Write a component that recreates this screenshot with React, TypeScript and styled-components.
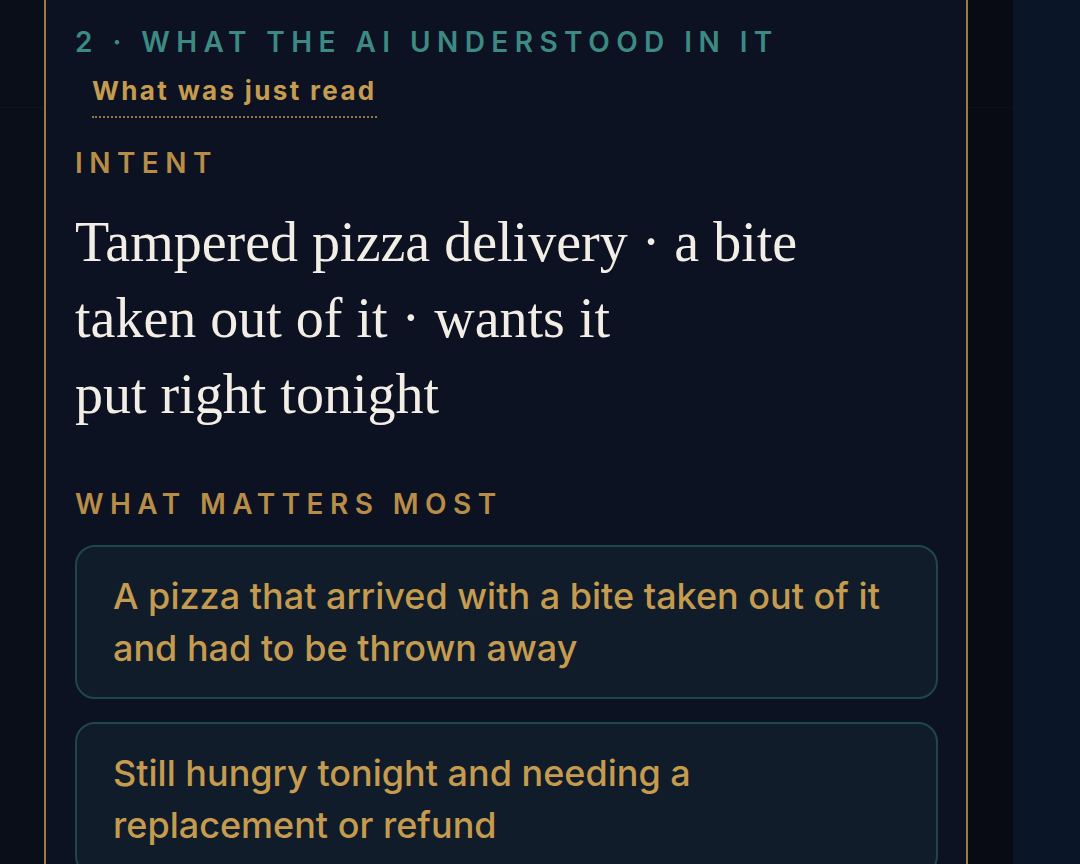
import styled, { createGlobalStyle } from 'styled-components';

const GlobalStyle = createGlobalStyle`
  html, body {
    margin: 0;
    padding: 0;
    background: #0a0e18;
  }
  * {
    box-sizing: border-box;
  }
`;

const gold = '#b88d48';
const goldText = '#c59b4f';
const teal = '#3d8a84';

// page shell: dark gutters either side of the bordered panel
const Page = styled.div`
  display: flex;
  width: 1080px;
  height: 864px;
  overflow: hidden;
  background: #0a0e18;
`;

const Gutter = styled.div<{ $tone: string; $width: number }>`
  flex: 0 0 ${(p) => p.$width}px;
  background: ${(p) => p.$tone};
  background-image: linear-gradient(
    to bottom,
    transparent 107px,
    rgba(255, 255, 255, 0.018) 107px,
    rgba(255, 255, 255, 0.018) 108px,
    transparent 108px
  );
`;

const SidePane = styled.div`
  flex: 1;
  background: #0a1628;
`;

const Panel = styled.main`
  flex: 0 0 924px;
  background: #0c1221;
  border-left: 2px solid #9c7a42;
  border-right: 2px solid #9c7a42;
  padding: 24px 28px 0 29px;
  display: flex;
  flex-direction: column;
`;

const Eyebrow = styled.div<{ $color: string; $gap?: number }>`
  margin-top: ${(p) => p.$gap ?? 0}px;
  font-family: 'Inter', sans-serif;
  font-weight: 600;
  font-size: 28px;
  line-height: 36px;
  letter-spacing: 0.23em;
  text-transform: uppercase;
  color: ${(p) => p.$color};
`;

const SourceLink = styled.span`
  align-self: flex-start;
  margin: 14px 0 0 17px;
  padding-bottom: 8px;
  font-family: 'Inter', sans-serif;
  font-weight: 700;
  font-size: 26px;
  line-height: 34px;
  letter-spacing: 0.09em;
  color: ${goldText};
  border-bottom: 2px dotted rgba(197, 155, 79, 0.75);
`;

const IntentText = styled.p`
  margin: 23px 0 0;
  font-family: 'Liberation Serif', serif;
  font-size: 56px;
  line-height: 76px;
  color: #f3eee5;
`;

const Cards = styled.div`
  display: flex;
  flex-direction: column;
  gap: 23px;
  margin-top: 23px;
`;

const Card = styled.div`
  background: #111c2a;
  border: 2px solid #1e474d;
  border-radius: 20px;
  padding: 23px 36px;
  font-family: 'Inter', sans-serif;
  font-weight: 500;
  font-size: 36px;
  line-height: 52px;
  color: ${goldText};
`;

const matters = [
  'A pizza that arrived with a bite taken out of it and had to be thrown away',
  'Still hungry tonight and needing a replacement or refund',
];

const App = () => {
  return (
    <>
      <GlobalStyle />
      <Page>
        <Gutter $tone="#0a0e18" $width={44} />
        <Panel>
          <Eyebrow $color={teal}>2 · What the AI understood in it</Eyebrow>
          <SourceLink>What was just read</SourceLink>
          <Eyebrow $color={gold} $gap={27}>
            Intent
          </Eyebrow>
          <IntentText>
            Tampered pizza delivery · a bite
            <br />
            taken out of it · wants it
            <br />
            put right tonight
          </IntentText>
          <Eyebrow $color={gold} $gap={54}>
            What matters most
          </Eyebrow>
          <Cards>
            {matters.map((m) => (
              <Card key={m}>{m}</Card>
            ))}
          </Cards>
        </Panel>
        <Gutter $tone="#080b13" $width={45} />
        <SidePane />
      </Page>
    </>
  );
};

export default App;
